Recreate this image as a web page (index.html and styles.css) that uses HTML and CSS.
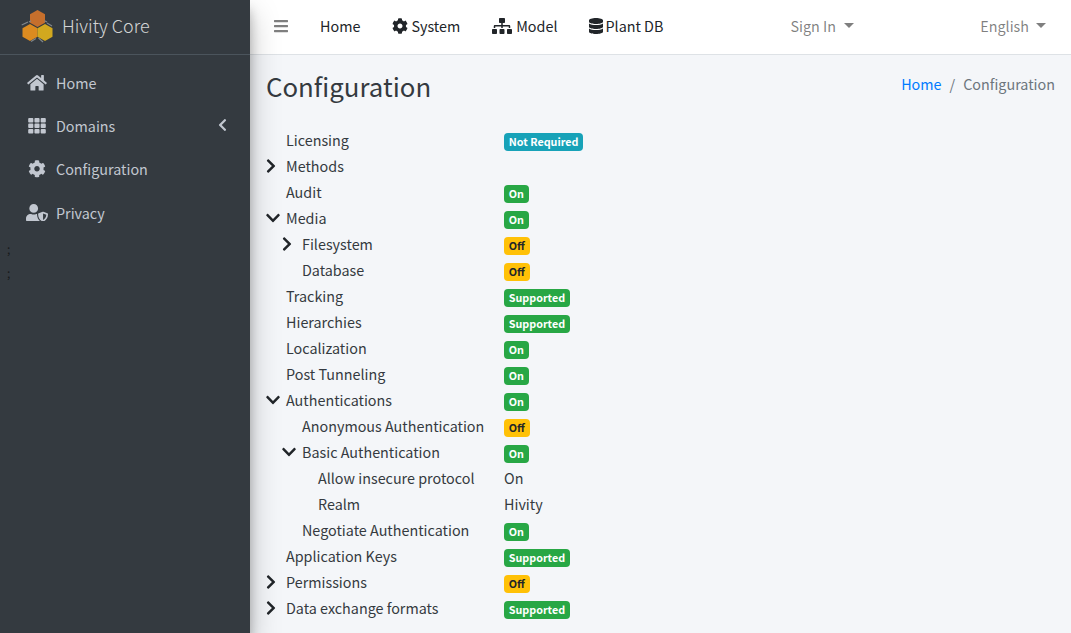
FILE: index.html
```html
<!DOCTYPE html>
<html lang="en">
<head>
<meta charset="utf-8">
<title>Configuration - Hivity Core</title>
<link rel="stylesheet" href="styles.css">
</head>
<body>
<div class="app">
  <aside class="sidebar">
    <a class="brand" href="#">
      <svg class="logo" viewBox="0 0 36 36" width="36" height="36">
        <polygon fill="#c66f2c" points="17.5,1 25,5.25 25,13.75 17.5,18 10,13.75 10,5.25"/>
        <polygon fill="#dc8b20" points="10,15 17.5,19.25 17.5,27.75 10,32 2.5,27.75 2.5,19.25"/>
        <polygon fill="#d2a81f" points="25,15 32.5,19.25 32.5,27.75 25,32 17.5,27.75 17.5,19.25"/>
        <g fill="none" stroke="#80868b" stroke-width="1.2">
          <path d="M1.7 16 L8 13 M9 13 L11 11.7 M24.5 11.7 L27 13 M27 14 L32 17"/>
          <path d="M11 32.5 L16 29.5 M18.5 29 L23 33"/>
        </g>
      </svg>
      <span class="brand-text">Hivity Core</span>
    </a>
    <nav class="side-nav">
      <a class="side-link" href="#">
        <svg class="side-icon" viewBox="0 0 576 512"><path d="M280.37 148.26L96 300.11V464a16 16 0 0 0 16 16l112.06-.29a16 16 0 0 0 15.92-16V368a16 16 0 0 1 16-16h64a16 16 0 0 1 16 16v95.64a16 16 0 0 0 16 16.05L464 480a16 16 0 0 0 16-16V300L295.67 148.26a12.19 12.19 0 0 0-15.3 0zM571.6 251.47L488 182.56V44.05a12 12 0 0 0-12-12h-56a12 12 0 0 0-12 12v72.61L318.47 43a48 48 0 0 0-61 0L4.34 251.47a12 12 0 0 0-1.6 16.9l25.5 31A12 12 0 0 0 45.15 301l235.22-193.74a12.19 12.19 0 0 1 15.3 0L530.9 301a12 12 0 0 0 16.9-1.6l25.5-31a12 12 0 0 0-1.7-16.93z"/></svg>
        <span class="side-text">Home</span>
      </a>
      <a class="side-link" href="#">
        <svg class="side-icon" viewBox="0 0 512 512"><path d="M149.333 56v80c0 13.255-10.745 24-24 24H24c-13.255 0-24-10.745-24-24V56c0-13.255 10.745-24 24-24h101.333c13.255 0 24 10.745 24 24zm181.334 240v-80c0-13.255-10.745-24-24-24H205.333c-13.255 0-24 10.745-24 24v80c0 13.255 10.745 24 24 24h101.333c13.256 0 24.001-10.745 24.001-24zm32-240v80c0 13.255 10.745 24 24 24H488c13.255 0 24-10.745 24-24V56c0-13.255-10.745-24-24-24H386.667c-13.255 0-24 10.745-24 24zm-32 80V56c0-13.255-10.745-24-24-24H205.333c-13.255 0-24 10.745-24 24v80c0 13.255 10.745 24 24 24h101.333c13.256 0 24.001-10.745 24.001-24zm-205.334 56H24c-13.255 0-24 10.745-24 24v80c0 13.255 10.745 24 24 24h101.333c13.255 0 24-10.745 24-24v-80c0-13.255-10.745-24-24-24zM0 376v80c0 13.255 10.745 24 24 24h101.333c13.255 0 24-10.745 24-24v-80c0-13.255-10.745-24-24-24H24c-13.255 0-24 10.745-24 24zm386.667-56H488c13.255 0 24-10.745 24-24v-80c0-13.255-10.745-24-24-24H386.667c-13.255 0-24 10.745-24 24v80c0 13.255 10.745 24 24 24zm0 160H488c13.255 0 24-10.745 24-24v-80c0-13.255-10.745-24-24-24H386.667c-13.255 0-24 10.745-24 24v80c0 13.255 10.745 24 24 24zM181.333 376v80c0 13.255 10.745 24 24 24h101.333c13.255 0 24-10.745 24-24v-80c0-13.255-10.745-24-24-24H205.333c-13.255 0-24 10.745-24 24z"/></svg>
        <span class="side-text">Domains</span>
        <svg class="side-caret" viewBox="0 0 320 512"><path d="M34.52 239.03L228.87 44.69c9.37-9.37 24.57-9.37 33.94 0l22.67 22.67c9.36 9.36 9.37 24.52.04 33.9L131.49 256l154.02 154.75c9.34 9.38 9.32 24.54-.04 33.9l-22.67 22.67c-9.37 9.37-24.57 9.37-33.94 0L34.52 272.97c-9.37-9.37-9.37-24.57 0-33.94z"/></svg>
      </a>
      <a class="side-link" href="#">
        <svg class="side-icon" viewBox="0 0 512 512"><path d="M487.4 315.7l-42.6-24.6c4.3-23.2 4.3-47 0-70.2l42.6-24.6c4.9-2.8 7.1-8.6 5.5-14-11.1-35.6-30-67.8-54.7-94.6-3.8-4.1-10-5.1-14.8-2.3L380.8 110c-17.9-15.4-38.5-27.3-60.8-35.1V25.8c0-5.6-3.9-10.5-9.4-11.7-36.7-8.2-74.3-7.8-109.2 0-5.5 1.2-9.4 6.1-9.4 11.7V75c-22.2 7.9-42.8 19.8-60.8 35.1L88.7 85.5c-4.9-2.8-11-1.9-14.8 2.3-24.7 26.7-43.6 58.9-54.7 94.6-1.7 5.4.6 11.2 5.5 14L67.3 221c-4.3 23.2-4.3 47 0 70.2l-42.6 24.6c-4.9 2.8-7.1 8.6-5.5 14 11.1 35.6 30 67.8 54.7 94.6 3.8 4.1 10 5.1 14.8 2.3l42.6-24.6c17.9 15.4 38.5 27.3 60.8 35.1v49.2c0 5.6 3.9 10.5 9.4 11.7 36.7 8.2 74.3 7.8 109.2 0 5.5-1.2 9.4-6.1 9.4-11.7v-49.2c22.2-7.9 42.8-19.8 60.8-35.1l42.6 24.6c4.9 2.8 11 1.9 14.8-2.3 24.7-26.7 43.6-58.9 54.7-94.6 1.5-5.5-.7-11.3-5.6-14.1zM256 336c-44.1 0-80-35.9-80-80s35.9-80 80-80 80 35.9 80 80-35.9 80-80 80z"/></svg>
        <span class="side-text">Configuration</span>
      </a>
      <a class="side-link" href="#">
        <svg class="side-icon" viewBox="0 0 640 512"><path d="M622.3 271.1l-115.2-45c-4.1-1.6-12.6-3.7-22.2 0l-115.2 45c-10.7 4.2-17.7 14-17.7 24.9 0 111.6 68.7 188.8 132.9 213.9 9.6 3.7 18 1.6 22.2 0C558.4 489.9 640 420.5 640 296c0-10.9-7-20.7-17.7-24.9zM496 462.4V273.3l95.5 37.3c-5.6 87.1-60.9 135.4-95.5 151.8zM224 256c70.7 0 128-57.3 128-128S294.7 0 224 0 96 57.3 96 128s57.3 128 128 128zm96 40c0-2.5.8-4.8 1.1-7.2-2.5-.1-4.9-.8-7.5-.8h-16.7c-22.2 10.2-46.9 16-72.9 16s-50.6-5.8-72.9-16h-16.7C60.2 288 0 348.2 0 422.4V464c0 26.5 21.5 48 48 48h352c6.8 0 13.3-1.5 19.2-4-54-42.9-99.2-116.7-99.2-212z"/></svg>
        <span class="side-text">Privacy</span>
      </a>
    </nav>
    <span class="stray stray-a">;</span>
    <span class="stray stray-b">;</span>
  </aside>
  <div class="main">
    <header class="topbar">
      <a class="burger" href="#" aria-label="Menu">
        <svg class="burger-icon" viewBox="0 0 448 512"><path d="M16 132h416c8.837 0 16-7.163 16-16V76c0-8.837-7.163-16-16-16H16C7.163 60 0 67.163 0 76v40c0 8.837 7.163 16 16 16zm0 160h416c8.837 0 16-7.163 16-16v-40c0-8.837-7.163-16-16-16H16c-8.837 0-16 7.163-16 16v40c0 8.837 7.163 16 16 16zm0 160h416c8.837 0 16-7.163 16-16v-40c0-8.837-7.163-16-16-16H16c-8.837 0-16 7.163-16 16v40c0 8.837 7.163 16 16 16z"/></svg>
      </a>
      <a class="top-link top-home" href="#">Home</a>
      <a class="top-link top-system" href="#">
        <svg class="top-icon" viewBox="0 0 512 512"><path d="M487.4 315.7l-42.6-24.6c4.3-23.2 4.3-47 0-70.2l42.6-24.6c4.9-2.8 7.1-8.6 5.5-14-11.1-35.6-30-67.8-54.7-94.6-3.8-4.1-10-5.1-14.8-2.3L380.8 110c-17.9-15.4-38.5-27.3-60.8-35.1V25.8c0-5.6-3.9-10.5-9.4-11.7-36.7-8.2-74.3-7.8-109.2 0-5.5 1.2-9.4 6.1-9.4 11.7V75c-22.2 7.9-42.8 19.8-60.8 35.1L88.7 85.5c-4.9-2.8-11-1.9-14.8 2.3-24.7 26.7-43.6 58.9-54.7 94.6-1.7 5.4.6 11.2 5.5 14L67.3 221c-4.3 23.2-4.3 47 0 70.2l-42.6 24.6c-4.9 2.8-7.1 8.6-5.5 14 11.1 35.6 30 67.8 54.7 94.6 3.8 4.1 10 5.1 14.8 2.3l42.6-24.6c17.9 15.4 38.5 27.3 60.8 35.1v49.2c0 5.6 3.9 10.5 9.4 11.7 36.7 8.2 74.3 7.8 109.2 0 5.5-1.2 9.4-6.1 9.4-11.7v-49.2c22.2-7.9 42.8-19.8 60.8-35.1l42.6 24.6c4.9 2.8 11 1.9 14.8-2.3 24.7-26.7 43.6-58.9 54.7-94.6 1.5-5.5-.7-11.3-5.6-14.1zM256 336c-44.1 0-80-35.9-80-80s35.9-80 80-80 80 35.9 80 80-35.9 80-80 80z"/></svg>
        <span>System</span>
      </a>
      <a class="top-link top-model" href="#">
        <svg class="top-icon top-icon-wide" viewBox="0 0 640 512"><path d="M128 352H32c-17.67 0-32 14.33-32 32v96c0 17.67 14.33 32 32 32h96c17.67 0 32-14.33 32-32v-96c0-17.67-14.33-32-32-32zm-24-80h192v48h48v-48h192v48h48v-57.59c0-21.17-17.23-38.41-38.41-38.41H344v-64h40c17.67 0 32-14.33 32-32V32c0-17.67-14.33-32-32-32H256c-17.67 0-32 14.33-32 32v96c0 17.67 14.33 32 32 32h40v64H94.41C73.23 224 56 241.23 56 262.41V320h48v-48zm264 80h-96c-17.67 0-32 14.33-32 32v96c0 17.67 14.33 32 32 32h96c17.67 0 32-14.33 32-32v-96c0-17.67-14.33-32-32-32zm240 0h-96c-17.67 0-32 14.33-32 32v96c0 17.67 14.33 32 32 32h96c17.67 0 32-14.33 32-32v-96c0-17.67-14.33-32-32-32z"/></svg>
        <span>Model</span>
      </a>
      <a class="top-link top-db" href="#">
        <svg class="top-icon top-icon-db" viewBox="0 0 448 512"><path d="M448 73.143v45.714C448 159.143 347.667 192 224 192S0 159.143 0 118.857V73.143C0 32.857 100.333 0 224 0s224 32.857 224 73.143zM448 176v102.857C448 319.143 347.667 352 224 352S0 319.143 0 278.857V176c48.125 33.143 136.208 48.572 224 48.572S399.874 209.143 448 176zm0 160v102.857C448 479.143 347.667 512 224 512S0 479.143 0 438.857V336c48.125 33.143 136.208 48.572 224 48.572S399.874 369.143 448 336z"/></svg>
        <span>Plant DB</span>
      </a>
      <a class="top-drop top-signin" href="#">Sign In</a>
      <a class="top-drop top-lang" href="#">English</a>
    </header>
    <main class="content">
      <div class="page-head">
        <h1 class="page-title">Configuration</h1>
        <ol class="crumbs">
          <li><a href="#">Home</a></li>
          <li class="crumb-sep">/</li>
          <li class="crumb-current">Configuration</li>
        </ol>
      </div>
      <div class="tree">
        <div class="row"><div class="label"><span class="tog"></span>Licensing</div><div class="value"><span class="badge info">Not Required</span></div></div>
        <div class="row"><div class="label"><span class="tog"><svg class="chev-r" viewBox="0 0 320 512"><use href="#r"/></svg></span>Methods</div><div class="value"></div></div>
        <div class="row"><div class="label"><span class="tog"></span>Audit</div><div class="value"><span class="badge ok">On</span></div></div>
        <div class="row"><div class="label"><span class="tog"><svg class="chev-d" viewBox="0 0 448 512"><use href="#d"/></svg></span>Media</div><div class="value"><span class="badge ok">On</span></div></div>
        <div class="row"><div class="label d1"><span class="tog"><svg class="chev-r" viewBox="0 0 320 512"><use href="#r"/></svg></span>Filesystem</div><div class="value"><span class="badge warn">Off</span></div></div>
        <div class="row"><div class="label d1"><span class="tog"></span>Database</div><div class="value"><span class="badge warn">Off</span></div></div>
        <div class="row"><div class="label"><span class="tog"></span>Tracking</div><div class="value"><span class="badge ok">Supported</span></div></div>
        <div class="row"><div class="label"><span class="tog"></span>Hierarchies</div><div class="value"><span class="badge ok">Supported</span></div></div>
        <div class="row"><div class="label"><span class="tog"></span>Localization</div><div class="value"><span class="badge ok">On</span></div></div>
        <div class="row"><div class="label"><span class="tog"></span>Post Tunneling</div><div class="value"><span class="badge ok">On</span></div></div>
        <div class="row"><div class="label"><span class="tog"><svg class="chev-d" viewBox="0 0 448 512"><use href="#d"/></svg></span>Authentications</div><div class="value"><span class="badge ok">On</span></div></div>
        <div class="row"><div class="label d1"><span class="tog"></span>Anonymous Authentication</div><div class="value"><span class="badge warn">Off</span></div></div>
        <div class="row"><div class="label d1"><span class="tog"><svg class="chev-d" viewBox="0 0 448 512"><use href="#d"/></svg></span>Basic Authentication</div><div class="value"><span class="badge ok">On</span></div></div>
        <div class="row"><div class="label d2"><span class="tog"></span>Allow insecure protocol</div><div class="value">On</div></div>
        <div class="row"><div class="label d2"><span class="tog"></span>Realm</div><div class="value">Hivity</div></div>
        <div class="row"><div class="label d1"><span class="tog"></span>Negotiate Authentication</div><div class="value"><span class="badge ok">On</span></div></div>
        <div class="row"><div class="label"><span class="tog"></span>Application Keys</div><div class="value"><span class="badge ok">Supported</span></div></div>
        <div class="row"><div class="label"><span class="tog"><svg class="chev-r" viewBox="0 0 320 512"><use href="#r"/></svg></span>Permissions</div><div class="value"><span class="badge warn">Off</span></div></div>
        <div class="row"><div class="label"><span class="tog"><svg class="chev-r" viewBox="0 0 320 512"><use href="#r"/></svg></span>Data exchange formats</div><div class="value"><span class="badge ok">Supported</span></div></div>
      </div>
    </main>
  </div>
</div>
<svg class="defs" width="0" height="0" aria-hidden="true">
  <defs>
    <path id="r" d="M285.476 272.971L91.132 467.314c-9.373 9.373-24.569 9.373-33.941 0l-22.667-22.667c-9.357-9.357-9.375-24.522-.04-33.901L188.505 256 34.484 101.255c-9.335-9.379-9.317-24.544.04-33.901l22.667-22.667c9.373-9.373 24.569-9.373 33.941 0L285.475 239.03c9.373 9.372 9.373 24.568.001 33.941z"/>
    <path id="d" d="M207.029 381.476L12.686 187.132c-9.373-9.373-9.373-24.569 0-33.941l22.667-22.667c9.357-9.357 24.522-9.375 33.901-.04L224 284.505l154.745-154.021c9.379-9.335 24.544-9.317 33.901.04l22.667 22.667c9.373 9.373 9.373 24.569 0 33.941L240.971 381.476c-9.373 9.372-24.569 9.372-33.942 0z"/>
  </defs>
</svg>
</body>
</html>
```

FILE: styles.css
```css
* { box-sizing: border-box; }
html, body { margin: 0; height: 100%; }
body {
  font-family: "Noto Sans CJK SC", "Liberation Sans", sans-serif;
  font-size: 14.35px;
  line-height: 24px;
  color: #212529;
  background: #f4f6f9;
  overflow: hidden;
}
a { text-decoration: none; color: inherit; }
.defs { position: absolute; }
.app { display: flex; height: 100vh; }

.sidebar {
  position: relative;
  z-index: 2;
  flex: 0 0 250px;
  background: #343a40;
  box-shadow: 0 14px 28px rgba(0,0,0,.25), 0 10px 10px rgba(0,0,0,.22);
}
.brand {
  display: flex;
  align-items: center;
  height: 55px;
  padding: 0 0 1px 20px;
  border-bottom: 1px solid #4b545c;
  color: rgba(255,255,255,.8);
}
.logo { flex: none; margin-right: 6px; }
.brand-text { font-size: 17.95px; line-height: 30px; font-weight: 300; margin-bottom: 4px; }
.side-nav { display: flex; flex-direction: column; padding-top: 7px; }
.side-link {
  display: flex;
  align-items: center;
  height: 43.3px;
  padding: 0 20px 0 25px;
  color: #c2c7d0;
}
.side-text { margin-bottom: 2px; }
.side-icon { flex: none; width: 24px; height: 17.6px; margin: 0 7px 2px 0; fill: #c2c7d0; }
.side-caret { width: 11px; height: 14px; margin: 0 2px 4px auto; fill: #c2c7d0; }
.stray { position: absolute; left: 7px; font-size: 12px; line-height: 14px; color: #17191b; }
.stray-a { top: 242px; }
.stray-b { top: 266px; }

.main { flex: 1; min-width: 0; display: flex; flex-direction: column; }
.topbar {
  display: flex;
  align-items: center;
  height: 55px;
  background: #fff;
  border-bottom: 1px solid #dee2e6;
  padding: 0 0 3px 24px;
  color: #212529;
}
.burger { display: flex; color: rgba(0,0,0,.5); }
.burger-icon { width: 14px; height: 16px; fill: rgba(0,0,0,.5); }
.top-link { display: flex; align-items: center; }
.top-home { margin-left: 32px; }
.top-system { margin-left: 32px; }
.top-model { margin-left: 32px; }
.top-db { margin-left: 32px; }
.top-icon { width: 16px; height: 16px; margin-right: 3px; fill: #212529; }
.top-icon-wide { width: 20px; margin-right: 4px; }
.top-icon-db { width: 14px; margin-right: 2px; }
.top-drop { display: flex; align-items: center; color: rgba(0,0,0,.5); }
.top-drop::after {
  content: "";
  margin-left: 8px;
  border-top: 5px solid rgba(0,0,0,.5);
  border-left: 5px solid transparent;
  border-right: 5px solid transparent;
}
.top-signin { margin-left: 127px; }
.top-lang { margin-left: auto; margin-right: 25px; }
.top-lang::after { margin-left: 7px; }

.content { flex: 1; padding: 0 16px; }
.page-head { display: flex; justify-content: space-between; align-items: flex-start; padding-top: 13px; height: 73px; }
.page-title { margin: 0; font-size: 25.8px; line-height: 35px; font-weight: 400; color: #343a40; }
.crumbs { display: flex; list-style: none; margin: 4px 0 0; padding: 0; color: #6c757d; }
.crumbs a { color: #007bff; }
.crumb-sep { padding: 0 8px; }

.tree { display: flex; flex-direction: column; }
.row { display: grid; grid-template-columns: 238px 1fr; height: 26px; align-items: center; color: #343a40; }
.label { display: flex; align-items: center; white-space: nowrap; padding-bottom: 2px; }
.d1 { padding-left: 16px; }
.d2 { padding-left: 32px; }
.tog { flex: none; display: flex; align-items: center; width: 20px; height: 16px; }
.tog svg { fill: #212529; }
.chev-r { width: 10px; height: 16px; }
.chev-d { width: 14px; height: 16px; }
.value { display: flex; align-items: center; padding-bottom: 2px; }
.badge {
  display: inline-block;
  margin-top: 4px;
  padding: 0 4.8px;
  height: 18px;
  font-size: 10.75px;
  line-height: 18px;
  font-weight: 700;
  border-radius: 4px;
}
.ok { background: #28a745; color: #fff; }
.warn { background: #ffc107; color: #212529; }
.info { background: #17a2b8; color: #fff; }
```
